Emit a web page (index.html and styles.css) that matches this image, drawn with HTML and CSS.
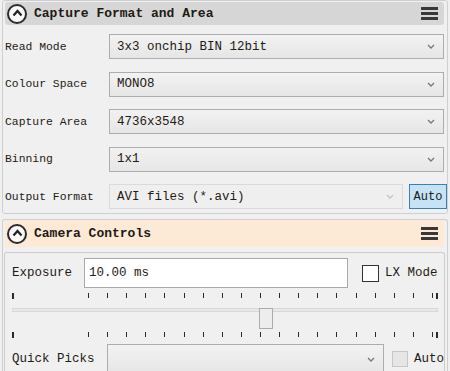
FILE: index.html
```html
<!DOCTYPE html>
<html>
<head>
	<title>Capture settings</title>
	<link rel="stylesheet" href="styles.css">
</head>
<body>
	<div class="panel capture">
		<div class="header grey">
			<span class="toggle"><svg width="11" height="8" viewBox="0 0 11 8"><polyline points="1.5,6.5 5.5,2 9.5,6.5" fill="none" stroke="#222" stroke-width="2.2"/></svg></span>
			<span class="title">Capture Format and Area</span>
			<svg class="menu" width="17" height="13" viewBox="0 0 17 13"><rect x="0" y="0" width="17" height="3"/><rect x="0" y="5" width="17" height="3"/><rect x="0" y="10" width="17" height="3"/></svg>
		</div>
		<div class="rows">
			<div class="row">
				<span class="label">Read Mode</span>
				<div class="combo"><span>3x3 onchip BIN 12bit</span><svg class="chev" width="8" height="5" viewBox="0 0 8 5"><polyline points="1,1 4,4 7,1" fill="none" stroke="#777" stroke-width="1.3"/></svg></div>
			</div>
			<div class="row">
				<span class="label">Colour Space</span>
				<div class="combo"><span>MONO8</span><svg class="chev" width="8" height="5" viewBox="0 0 8 5"><polyline points="1,1 4,4 7,1" fill="none" stroke="#777" stroke-width="1.3"/></svg></div>
			</div>
			<div class="row">
				<span class="label">Capture Area</span>
				<div class="combo"><span>4736x3548</span><svg class="chev" width="8" height="5" viewBox="0 0 8 5"><polyline points="1,1 4,4 7,1" fill="none" stroke="#777" stroke-width="1.3"/></svg></div>
			</div>
			<div class="row">
				<span class="label">Binning</span>
				<div class="combo"><span>1x1</span><svg class="chev" width="8" height="5" viewBox="0 0 8 5"><polyline points="1,1 4,4 7,1" fill="none" stroke="#777" stroke-width="1.3"/></svg></div>
			</div>
			<div class="row">
				<span class="label">Output Format</span>
				<div class="combo disabled"><span>AVI files (*.avi)</span><svg class="chev" width="8" height="5" viewBox="0 0 8 5"><polyline points="1,1 4,4 7,1" fill="none" stroke="#c4c4c4" stroke-width="1.3"/></svg></div>
				<button type="button" class="auto-btn">Auto</button>
			</div>
		</div>
	</div>

	<div class="panel camera">
		<div class="header peach">
			<span class="toggle"><svg width="11" height="8" viewBox="0 0 11 8"><polyline points="1.5,6.5 5.5,2 9.5,6.5" fill="none" stroke="#222" stroke-width="2.2"/></svg></span>
			<span class="title">Camera Controls</span>
			<svg class="menu" width="17" height="13" viewBox="0 0 17 13"><rect x="0" y="0" width="17" height="3"/><rect x="0" y="5" width="17" height="3"/><rect x="0" y="10" width="17" height="3"/></svg>
		</div>
		<div class="group">
			<div class="exp-row">
				<span class="exp-label">Exposure</span>
				<input type="text" class="exp-input" value="10.00 ms">
				<span class="check"></span>
				<span class="check-text">LX Mode</span>
			</div>
			<div class="ticks">
				<span class="tick end"></span>
				<div class="tick-scale">
					<span class="tick"></span><span class="tick"></span><span class="tick"></span><span class="tick"></span><span class="tick"></span>
					<span class="tick"></span><span class="tick"></span><span class="tick"></span><span class="tick"></span><span class="tick"></span>
					<span class="tick"></span><span class="tick"></span><span class="tick"></span><span class="tick"></span><span class="tick"></span>
					<span class="tick"></span><span class="tick"></span><span class="tick"></span><span class="tick"></span>
				</div>
				<span class="tick end last"></span>
			</div>
			<div class="slider">
				<div class="groove"></div>
				<div class="handle"></div>
			</div>
			<div class="ticks">
				<span class="tick end"></span>
				<div class="tick-scale">
					<span class="tick"></span><span class="tick"></span><span class="tick"></span><span class="tick"></span><span class="tick"></span>
					<span class="tick"></span><span class="tick"></span><span class="tick"></span><span class="tick"></span><span class="tick"></span>
					<span class="tick"></span><span class="tick"></span><span class="tick"></span><span class="tick"></span><span class="tick"></span>
					<span class="tick"></span><span class="tick"></span><span class="tick"></span><span class="tick"></span>
				</div>
				<span class="tick end last"></span>
			</div>
			<div class="quick-row">
				<span class="quick-label">Quick Picks</span>
				<div class="combo quick"><span></span><svg class="chev" width="8" height="5" viewBox="0 0 8 5"><polyline points="1,1 4,4 7,1" fill="none" stroke="#777" stroke-width="1.3"/></svg></div>
				<span class="check off"></span>
				<span class="check-text">Auto</span>
			</div>
		</div>
	</div>
</body>
</html>
```

FILE: styles.css
```css
body{
	margin: 0;
	background: #f0f0f0;
	font-family: "Liberation Mono", "DejaVu Sans Mono", monospace;
	color: #1f1a14;
	overflow: hidden;
}
.panel{
	margin-left: 2px;
	width: 439px;
	border: 1px solid #cfcfcf;
	border-radius: 3px;
	padding: 1px 3px 0 2px;
}
.capture{
	padding-bottom: 4px;
}
.camera{
	margin-top: 5px;
	padding-top: 0;
	height: 151px;
	border-bottom: none;
	border-radius: 3px 3px 0 0;
}
.header{
	display: flex;
	align-items: center;
	height: 23px;
	border-radius: 3px;
	padding-left: 2px;
	padding-right: 6px;
}
.grey{
	background: #d6d6d6;
}
.peach{
	background: #fcead7;
	height: 27px;
}
.toggle{
	width: 16px;
	height: 16px;
	border: 2px solid #2b2b2b;
	border-radius: 50%;
	background: #fafafa;
	display: flex;
	align-items: center;
	justify-content: center;
}
.toggle svg{
	margin-top: -2px;
}
.title{
	margin-left: 7px;
	font-size: 13px;
	font-weight: bold;
	flex: 1;
}
.menu{
	fill: #383838;
}
.rows{
	display: flex;
	flex-direction: column;
	gap: 12.5px;
	margin-top: 9px;
}
.row{
	display: flex;
	align-items: center;
	height: 25px;
}
.label{
	width: 104px;
	font-size: 11.4px;
}
.combo{
	flex: 1;
	height: 23px;
	border: 1px solid #adadad;
	background: linear-gradient(#f2f2f2, #e6e6e6);
	display: flex;
	align-items: center;
	padding: 0 8px 0 7px;
	font-size: 12.5px;
}
.combo span{
	flex: 1;
}
.combo.disabled{
	background: #efefef;
	border-color: #dadada;
}
.auto-btn{
	width: 38px;
	height: 25px;
	margin-left: 6px;
	margin-right: -3px;
	padding: 0;
	border: 1px solid #3c7fb1;
	background: #c5e2f6;
	font-family: "Liberation Mono", monospace;
	font-size: 12px;
	color: #1f1a14;
}
.group{
	margin-top: 5px;
	margin-left: -1px;
	width: 432px;
	height: 118px;
	border: 1px solid #cdcdcd;
	border-bottom: none;
	border-radius: 3px 3px 0 0;
	padding: 5px 0 0 7px;
}
.exp-row{
	display: flex;
	align-items: center;
	height: 30px;
}
.exp-label{
	width: 72px;
	font-size: 12.5px;
}
.exp-input{
	box-sizing: border-box;
	width: 264px;
	height: 30px;
	margin: 0;
	border: 1px solid #a9a9a9;
	background: #fff;
	padding: 0 4px;
	font-family: "Liberation Mono", monospace;
	font-size: 12.5px;
	color: #1f1a14;
}
.check{
	width: 15px;
	height: 15px;
	margin-left: 14px;
	border: 1px solid #333;
	background: #fff;
}
.check.off{
	margin-left: 8px;
	width: 14px;
	height: 14px;
	border-color: #c6c6c6;
	background: #e6e6e6;
}
.check-text{
	margin-left: 6px;
	font-size: 12.5px;
	white-space: nowrap;
}
.ticks{
	display: flex;
	height: 6px;
	margin-top: 5px;
}
.slider + .ticks{
	margin-top: 3px;
}
.tick{
	width: 1px;
	height: 5px;
	background: #2a2a2a;
}
.tick.end{
	width: 2px;
	height: 6px;
}
.tick-scale{
	display: flex;
	justify-content: space-between;
	width: 345px;
	margin-left: 74px;
}
.tick.last{
	margin-left: 3px;
}
.slider{
	position: relative;
	margin-top: 3px;
	height: 21px;
	width: 426px;
}
.groove{
	margin-top: 9px;
	height: 2px;
	border: 1px solid #d8d8d8;
	background: #e8e8e8;
}
.handle{
	position: absolute;
	left: 247px;
	top: 0;
	width: 12px;
	height: 19px;
	border: 1px solid #acacac;
	background: #ededed;
}
.quick-row{
	display: flex;
	align-items: center;
	margin-top: 6px;
	height: 30px;
}
.quick-label{
	width: 95px;
	font-size: 12.5px;
}
.combo.quick{
	flex: none;
	width: 260px;
	height: 28px;
}
```
